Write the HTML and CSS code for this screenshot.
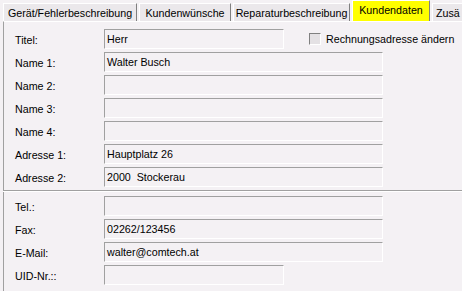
FILE: index.html
```html
<!DOCTYPE html>
<html lang="de">
<head>
    <meta charset="UTF-8">
    <title>Kundendaten</title>
    <link rel="stylesheet" href="styles.css">
</head>
<body>

    <!-- Reiter -->
    <div class="tabs">
        <div class="tab t1">Gerät/Fehlerbeschreibung</div>
        <div class="tab t2">Kundenwünsche</div>
        <div class="tab t3">Reparaturbeschreibung</div>
        <div class="tab t4 active">Kundendaten</div>
        <div class="tab t5">Zusä</div>
    </div>

    <div class="panel">
        <div class="row">
            <label>Titel:</label>
            <div class="field short">Herr</div>
            <div class="check">
                <span class="box"></span>
                <span>Rechnungsadresse ändern</span>
            </div>
        </div>
        <div class="row">
            <label>Name 1:</label>
            <div class="field">Walter Busch</div>
        </div>
        <div class="row">
            <label>Name 2:</label>
            <div class="field"></div>
        </div>
        <div class="row">
            <label>Name 3:</label>
            <div class="field"></div>
        </div>
        <div class="row">
            <label>Name 4:</label>
            <div class="field"></div>
        </div>
        <div class="row">
            <label>Adresse 1:</label>
            <div class="field">Hauptplatz 26</div>
        </div>
        <div class="row">
            <label>Adresse 2:</label>
            <div class="field">2000&nbsp; Stockerau</div>
        </div>

        <hr class="divider">

        <div class="row">
            <label>Tel.:</label>
            <div class="field"></div>
        </div>
        <div class="row">
            <label>Fax:</label>
            <div class="field">02262/123456</div>
        </div>
        <div class="row">
            <label>E-Mail:</label>
            <div class="field">walter@comtech.at</div>
        </div>
        <div class="row">
            <label>UID-Nr.::</label>
            <div class="field short"></div>
        </div>
    </div>

</body>
</html>
```

FILE: styles.css
```css
body {
    margin: 0;
    background-color: #f4f1f4;
    font-family: 'Liberation Sans', Arial, sans-serif;
    font-size: 10.7px;
    color: #000;
    overflow: hidden;
    width: 462px;
    height: 291px;
}

.tabs {
    display: flex;
    align-items: flex-end;
    height: 21px;
    padding-left: 3px;
    white-space: nowrap;
    overflow: hidden;
}

.tab {
    height: 18px;
    line-height: 18px;
    text-align: center;
    margin-right: 2px;
    background-color: #ebe8eb;
    border-top: 1px solid #fff;
    border-left: 1px solid #fff;
    border-right: 1px solid #808080;
    box-sizing: border-box;
    flex-shrink: 0;
}

.t1 { width: 134px; }
.t2 { width: 92px; }
.t3 { width: 117px; }
.t4 { width: 78px; }
.t5 { width: 32px; text-align: left; padding-left: 3px; border-right: none; }

.tab.active {
    height: 21px;
    line-height: 19px;
    background-color: #ffff00;
}

.panel {
    border-top: 1px solid #fff;
    border-left: 1px solid #a0a0a0;
    margin-left: 3px;
    height: 270px;
    padding: 7px 0 0 11px;
    box-sizing: border-box;
}

.row {
    display: flex;
    align-items: center;
    height: 20px;
    margin-bottom: 3px;
}

.row label {
    width: 89px;
    padding-top: 1px;
}

.field {
    width: 279px;
    height: 20px;
    line-height: 18px;
    padding-left: 2px;
    box-sizing: border-box;
    border-top: 1px solid #a0a0a0;
    border-left: 1px solid #a0a0a0;
    border-right: 1px solid #fff;
    border-bottom: 1px solid #fff;
    white-space: nowrap;
}

.field.short {
    width: 180px;
}

.check {
    display: flex;
    align-items: center;
    margin-left: 25px;
    white-space: nowrap;
}

.check .box {
    width: 12px;
    height: 12px;
    box-sizing: border-box;
    margin-right: 5px;
    border-top: 1px solid #808080;
    border-left: 1px solid #808080;
    border-right: 1px solid #fff;
    border-bottom: 1px solid #fff;
    background-color: #e4e1e4;
}

.divider {
    margin: 0 0 4px -12px;
    border: none;
    border-top: 1px solid #a0a0a0;
    border-bottom: 1px solid #fff;
    height: 0;
}
```
